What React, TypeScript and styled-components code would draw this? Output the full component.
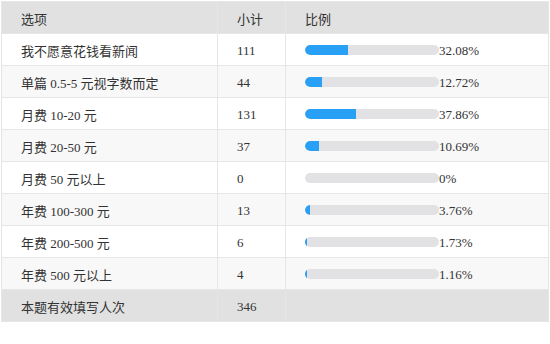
import React from "react"
import styled, { createGlobalStyle } from "styled-components"

const GlobalStyle = createGlobalStyle`
  body {
    margin: 0;
    background: #ffffff;
    font-family: "Liberation Serif", "Noto Sans CJK SC", serif;
  }
`

const Wrap = styled.div`
  padding: 1px 0 0 1px;
`

const Table = styled.table`
  width: 548px;
  border-collapse: collapse;
  border: 1px solid #e3e3e3;
  font-size: 13px;
  color: #333;
  table-layout: fixed;
`

const Row = styled.tr<{ $tone: "head" | "odd" | "even" }>`
  height: 32px;
  background: ${(p) =>
    p.$tone === "head" ? "#e1e1e1" : p.$tone === "even" ? "#f8f8f8" : "#ffffff"};
`

const Cell = styled.td<{ $pad?: number }>`
  border: 1px solid #e6e6e6;
  padding: 2px 0 0 ${(p) => p.$pad ?? 19}px;
  vertical-align: middle;
  white-space: nowrap;
`

const Track = styled.span`
  display: inline-block;
  vertical-align: middle;
  width: 134px;
  height: 10px;
  border-radius: 5px;
  background: #e2e2e4;
  overflow: hidden;
  margin-top: -3px;
`

const Fill = styled.span`
  display: block;
  height: 100%;
  background: #27a0f6;
  border-radius: 5px 0 0 5px;
`

const Pct = styled.span`
  vertical-align: middle;
`

const rows = [
  ["我不愿意花钱看新闻", 111, 32.08, "32.08%"],
  ["单篇 0.5-5 元视字数而定", 44, 12.72, "12.72%"],
  ["月费 10-20 元", 131, 37.86, "37.86%"],
  ["月费 20-50 元", 37, 10.69, "10.69%"],
  ["月费 50 元以上", 0, 0, "0%"],
  ["年费 100-300 元", 13, 3.76, "3.76%"],
  ["年费 200-500 元", 6, 1.73, "1.73%"],
  ["年费 500 元以上", 4, 1.16, "1.16%"],
] as const

export default function App() {
  return (
    <>
      <GlobalStyle />
      <Wrap>
        <Table>
          <colgroup>
            <col style={{ width: 216 }} />
            <col style={{ width: 68 }} />
            <col />
          </colgroup>
          <tbody>
            <Row $tone="head">
              <Cell>选项</Cell>
              <Cell>小计</Cell>
              <Cell>比例</Cell>
            </Row>
            {rows.map(([label, count, pct, text], i) => (
              <Row key={label} $tone={i % 2 === 0 ? "odd" : "even"}>
                <Cell>{label}</Cell>
                <Cell>{count}</Cell>
                <Cell>
                  <Track>
                    <Fill style={{ width: `${pct}%` }} />
                  </Track>
                  <Pct>{text}</Pct>
                </Cell>
              </Row>
            ))}
            <Row $tone="head">
              <Cell>本题有效填写人次</Cell>
              <Cell>346</Cell>
              <Cell />
            </Row>
          </tbody>
        </Table>
      </Wrap>
    </>
  )
}
